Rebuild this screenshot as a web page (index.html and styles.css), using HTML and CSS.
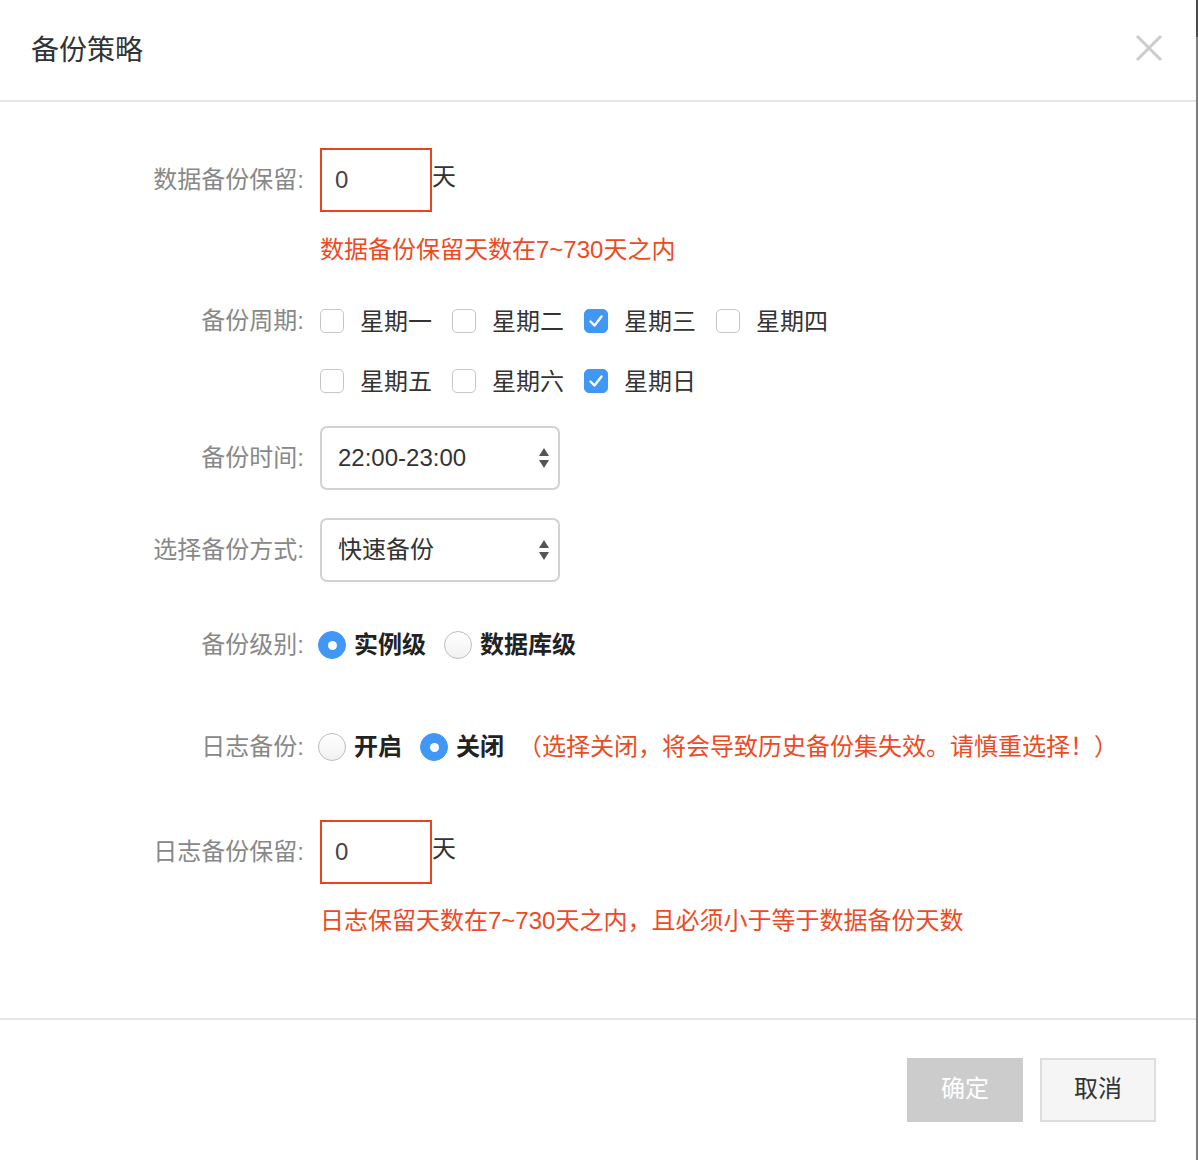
FILE: index.html
```html
<!DOCTYPE html>
<html lang="zh-CN">
<head>
<meta charset="utf-8">
<title>备份策略</title>
<link rel="stylesheet" href="styles.css">
</head>
<body>
<div class="dialog">
  <div class="scroll-mark"></div>
  <header class="dlg-header">
    <h1 class="dlg-title">备份策略</h1>
    <svg class="dlg-close" width="28" height="28" viewBox="0 0 28 28"><path d="M2 2 L26 26 M26 2 L2 26" stroke="#cccccc" stroke-width="3" fill="none"/></svg>
  </header>

  <div class="dlg-body">
    <div class="row row-retain">
      <div class="label">数据备份保留:</div>
      <div class="ctrl">
        <div class="num-input">0</div><span class="unit">天</span>
      </div>
    </div>
    <div class="row row-err1">
      <div class="label"></div>
      <div class="ctrl err">数据备份保留天数在7~730天之内</div>
    </div>

    <div class="row row-week">
      <div class="label">备份周期:</div>
      <div class="ctrl week-grid">
        <label class="chk"><span class="box"></span><span class="chk-text">星期一</span></label>
        <label class="chk"><span class="box"></span><span class="chk-text">星期二</span></label>
        <label class="chk"><span class="box on"><svg width="24" height="24" viewBox="0 0 24 24"><path d="M6.5 12.5 L10.5 16.5 L17.5 7.5" stroke="#fff" stroke-width="2.4" fill="none" stroke-linecap="round" stroke-linejoin="round"/></svg></span><span class="chk-text">星期三</span></label>
        <label class="chk"><span class="box"></span><span class="chk-text">星期四</span></label>
        <label class="chk"><span class="box"></span><span class="chk-text">星期五</span></label>
        <label class="chk"><span class="box"></span><span class="chk-text">星期六</span></label>
        <label class="chk"><span class="box on"><svg width="24" height="24" viewBox="0 0 24 24"><path d="M6.5 12.5 L10.5 16.5 L17.5 7.5" stroke="#fff" stroke-width="2.4" fill="none" stroke-linecap="round" stroke-linejoin="round"/></svg></span><span class="chk-text">星期日</span></label>
      </div>
    </div>

    <div class="row row-sel1">
      <div class="label">备份时间:</div>
      <div class="ctrl">
        <div class="select"><span>22:00-23:00</span>
          <svg class="arrows" width="12" height="22" viewBox="0 0 12 22"><path d="M1 9 L6 1 L11 9 Z M1 13 L6 21 L11 13 Z" fill="#555"/></svg>
        </div>
      </div>
    </div>

    <div class="row row-sel2">
      <div class="label">选择备份方式:</div>
      <div class="ctrl">
        <div class="select"><span>快速备份</span>
          <svg class="arrows" width="12" height="22" viewBox="0 0 12 22"><path d="M1 9 L6 1 L11 9 Z M1 13 L6 21 L11 13 Z" fill="#555"/></svg>
        </div>
      </div>
    </div>

    <div class="row row-level">
      <div class="label">备份级别:</div>
      <div class="ctrl radios">
        <span class="radio on"></span><span class="radio-text">实例级</span>
        <span class="radio"></span><span class="radio-text">数据库级</span>
      </div>
    </div>

    <div class="row row-log">
      <div class="label">日志备份:</div>
      <div class="ctrl radios">
        <span class="radio"></span><span class="radio-text">开启</span>
        <span class="radio on"></span><span class="radio-text">关闭</span>
        <span class="warn">（选择关闭，将会导致历史备份集失效。请慎重选择！）</span>
      </div>
    </div>

    <div class="row row-logretain">
      <div class="label">日志备份保留:</div>
      <div class="ctrl">
        <div class="num-input">0</div><span class="unit">天</span>
      </div>
    </div>
    <div class="row row-err2">
      <div class="label"></div>
      <div class="ctrl err">日志保留天数在7~730天之内，且必须小于等于数据备份天数</div>
    </div>
  </div>

  <footer class="dlg-footer">
    <button class="btn btn-ok" type="button">确定</button>
    <button class="btn btn-cancel" type="button">取消</button>
  </footer>
</div>
</body>
</html>
```

FILE: styles.css
```css
html, body {
  margin: 0;
  padding: 0;
  background: #fff;
}
body {
  font-family: "Liberation Sans", "Noto Sans CJK SC", sans-serif;
  color: #333;
}
.dialog {
  position: relative;
  width: 1196px;
  height: 1160px;
  border-right: 2px solid #7d7d7d;
  background: #fff;
}
.scroll-mark {
  position: absolute;
  right: -2px;
  top: 0;
  width: 2px;
  height: 37px;
  background: #4a4a4a;
}
.dlg-header {
  height: 100px;
  border-bottom: 2px solid #e6e6e6;
  display: flex;
  align-items: center;
  justify-content: space-between;
  padding: 0 33px 0 31px;
}
.dlg-title {
  margin: 0;
  font-size: 28px;
  font-weight: normal;
  color: #333;
  line-height: 40px;
  position: relative;
  top: 1px;
}
.dlg-close {
  position: relative;
  top: -2px;
}
.dlg-body {
  padding-bottom: 81px;
}
.row {
  display: flex;
  align-items: center;
}
.label {
  width: 304px;
  flex: none;
  text-align: right;
  font-size: 24px;
  color: #888;
  line-height: 32px;
  white-space: nowrap;
}
.ctrl {
  margin-left: 16px;
  display: flex;
  align-items: center;
  font-size: 24px;
}
.row-retain { margin-top: 46px; }
.row-err1 { margin-top: 22px; }
.row-week { margin-top: 35px; align-items: flex-start; }
.row-week .label { line-height: 40px; }
.row-sel1 { margin-top: 25px; }
.row-sel2 { margin-top: 28px; }
.row-level { margin-top: 43px; height: 40px; }
.row-log { margin-top: 62px; height: 40px; }
.row-logretain { margin-top: 53px; }
.row-err2 { margin-top: 21px; }

.num-input {
  box-sizing: border-box;
  width: 112px;
  height: 64px;
  border: 2px solid #e9441c;
  padding-left: 13px;
  font-size: 24px;
  line-height: 60px;
  color: #444;
}
.unit {
  font-size: 24px;
  color: #333;
  line-height: 32px;
  align-self: flex-start;
  margin-top: 13px;
}
.err {
  color: #ee4a1f;
  line-height: 32px;
  white-space: nowrap;
}

.week-grid {
  display: grid;
  grid-template-columns: repeat(4, 132px);
  grid-auto-rows: 40px;
  row-gap: 20px;
}
.chk {
  display: flex;
  align-items: center;
}
.box {
  box-sizing: border-box;
  width: 24px;
  height: 24px;
  border: 1.5px solid #c6c6c6;
  border-radius: 5px;
  background: #fff;
  flex: none;
  display: flex;
  align-items: center;
  justify-content: center;
}
.box.on {
  background: #3f97f6;
  border-color: #3f97f6;
}
.box svg { flex: none; }
.chk-text {
  margin-left: 16px;
  color: #333;
  font-size: 24px;
  line-height: 40px;
  position: relative;
  top: 1px;
}

.select {
  box-sizing: border-box;
  width: 240px;
  height: 64px;
  border: 2px solid #d2d2d2;
  border-radius: 7px;
  padding: 0 8px 0 16px;
  display: flex;
  align-items: center;
  justify-content: space-between;
  font-size: 24px;
  color: #333;
  background: #fff;
}
.select span { line-height: 32px; }

.radios {
  margin-left: 14px;
}
.radio {
  box-sizing: border-box;
  width: 28px;
  height: 28px;
  border-radius: 50%;
  border: 1.5px solid #bdbdbd;
  background: linear-gradient(#ffffff, #f1f1f1);
  flex: none;
  position: relative;
}
.radio.on {
  background: #4097f6;
  border-color: #4097f6;
}
.radio.on::after {
  content: "";
  position: absolute;
  left: 50%;
  top: 50%;
  width: 9px;
  height: 9px;
  margin: -4.5px 0 0 -4.5px;
  border-radius: 50%;
  background: #fff;
}
.radio-text {
  margin-left: 8px;
  margin-right: 18px;
  font-size: 24px;
  font-weight: bold;
  color: #222;
  line-height: 40px;
}
.warn {
  margin-left: -4px;
  color: #ee4a1f;
  font-size: 24px;
  line-height: 40px;
  white-space: nowrap;
}

.dlg-footer {
  border-top: 2px solid #e6e6e6;
  display: flex;
  justify-content: flex-end;
  gap: 17px;
  padding: 38px 40px 0 0;
}
.btn {
  box-sizing: border-box;
  width: 116px;
  height: 64px;
  font-family: "Liberation Sans", "Noto Sans CJK SC", sans-serif;
  font-size: 24px;
  line-height: 32px;
  padding: 0 0 2px 0;
  cursor: pointer;
}
.btn-ok {
  background: #cccccc;
  border: none;
  color: #fff;
}
.btn-cancel {
  background: #f5f5f5;
  border: 2px solid #dddddd;
  color: #333;
}
```
